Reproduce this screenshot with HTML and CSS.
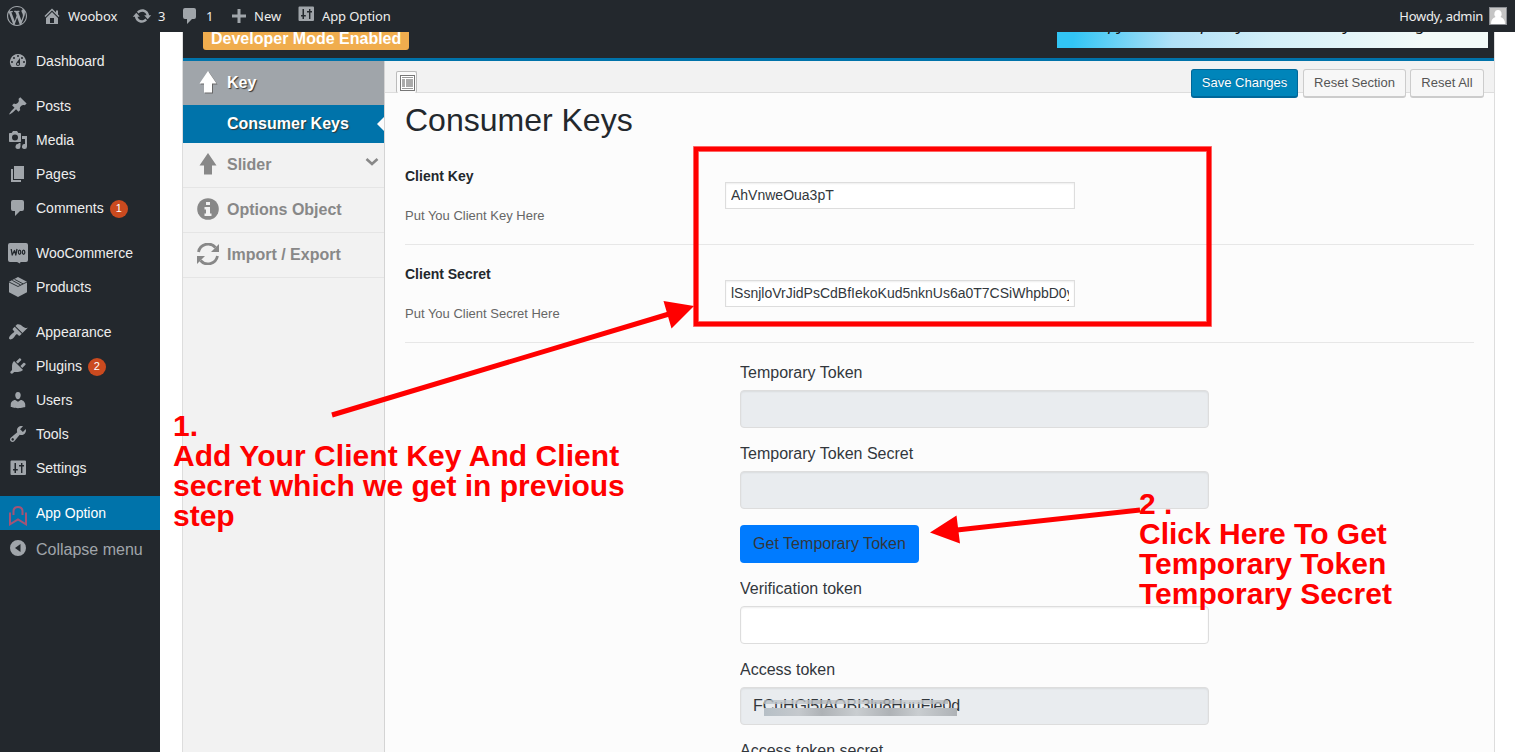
FILE: index.html
```
<!DOCTYPE html>
<html lang="en">
<head>
<meta charset="utf-8">
<title>App Option</title>
<link rel="stylesheet" href="styles.css">
</head>
<body>
<svg width="0" height="0" class="defs">
  <defs>
    <symbol id="settings" viewBox="0 0 20 20"><path fill-rule="evenodd" d="M3.500 2.500h13.500q1 0 1 1v12.500q0 1-1 1H3.500q-1 0-1-1V3.500q0-1 1-1zM6.500 5v6H5v1.500h1.500V15H8v-2.500h1.800V11H8V5zM13 5v2h-2v1.500h2V15h1.400V8.500H16V7h-1.600V5z"/></symbol>
    <symbol id="comment" viewBox="0 0 20 20"><path d="M5 2h9q2 0 2 2v7q0 2-2 2h-2l-5 5v-5H5q-2 0-2-2V4q0-2 2-2z"/></symbol>
    <symbol id="up" viewBox="0 0 22 22"><path d="M11 0l8.500 12.500H15V21.500H7v-9H2.500z"/></symbol>
  </defs>
</svg>
<header class="adminbar">
  <svg class="wp" viewBox="0 0 20 20"><path d="M20 10c0-5.510-4.490-10-10-10C4.480 0 0 4.490 0 10c0 5.520 4.480 10 10 10 5.510 0 10-4.480 10-10zM7.780 15.370L4.370 6.220c.55-.02 1.170-.08 1.170-.08.5-.06.44-1.130-.06-1.110 0 0-1.450.11-2.370.11-.18 0-.37 0-.58-.01C4.120 2.690 6.870 1.110 10 1.110c2.330 0 4.450.87 6.050 2.340-.68-.11-1.650.39-1.650 1.580 0 .74.45 1.360.9 2.100.35.610.55 1.360.55 2.460 0 1.490-1.400 5-1.400 5l-3.030-8.370c.54-.02.82-.17.82-.17.5-.05.44-1.250-.06-1.220 0 0-1.440.12-2.380.12-.87 0-2.330-.12-2.330-.12-.5-.03-.56 1.200-.06 1.220l.92.08 1.260 3.410zM17.410 10c.24-.64.74-1.870.43-4.250.7 1.290 1.050 2.710 1.050 4.250 0 3.290-1.730 6.240-4.400 7.780.97-2.590 1.940-5.200 2.920-7.780zM6.100 18.090C3.120 16.650 1.110 13.530 1.110 10c0-1.300.23-2.480.72-3.590C3.250 10.300 4.670 14.200 6.100 18.090zm4.030-6.630l2.580 6.980c-.86.29-1.760.45-2.710.45-.79 0-1.570-.11-2.290-.33.81-2.380 1.620-4.740 2.420-7.100z"/></svg>
  <svg class="home" viewBox="0 0 20 20"><path d="M16 8.500l1.530 1.530-1.060 1.060L10 4.600l-6.470 6.500-1.060-1.070L10 2.500l4 4v-2h2v4zm-6-2.460l6 5.990V18H4v-5.970zM12 17v-5H8v5h4z"/></svg>
  <span class="t-site">Woobox</span>
  <svg class="upd" viewBox="0 0 20 20"><path d="M10.200 3.280c3.530 0 6.430 2.610 6.920 6h2.080l-3.500 4-3.500-4h2.320c-.45-1.970-2.210-3.450-4.320-3.450-1.450 0-2.730.71-3.540 1.780L4.950 5.660C6.230 4.200 8.110 3.280 10.200 3.280zm-.4 13.440c-3.520 0-6.430-2.610-6.920-6H.8l3.500-4c1.170 1.330 2.330 2.670 3.500 4H5.480c.45 1.970 2.210 3.450 4.320 3.450 1.450 0 2.730-.71 3.540-1.780l1.710 1.950c-1.280 1.460-3.150 2.380-5.250 2.380z"/></svg>
  <span class="t-upd">3</span>
  <svg class="com"><use href="#comment"/></svg>
  <span class="t-com">1</span>
  <svg class="plus" viewBox="0 0 14 14"><path d="M5.500 0h3v5.500H14v3H8.500V14h-3V8.500H0v-3h5.500z"/></svg>
  <span class="t-new">New</span>
  <svg class="opt"><use href="#settings"/></svg>
  <span class="t-opt">App Option</span>
  <span class="howdy">Howdy, admin</span>
  <svg class="avatar" viewBox="0 0 18 18"><rect width="18" height="18" fill="#8c8f94"/><rect x="1" y="1" width="16" height="16" fill="#c5c5c5"/><path fill="#fff" d="M9 3a3.500 4 0 0 1 2.500 7c3 1 4.500 3 4.500 7H2c0-4 1.500-6 4.500-7A3.500 4 0 0 1 9 3z"/></svg>
</header>
<div class="shell">
  <nav class="menu">
    <a><svg viewBox="0 0 20 20"><path fill-rule="evenodd" d="M3.760 16h12.480A7.998 7.998 0 0 0 10 3a7.998 7.998 0 0 0-6.240 13zM10 4a1 1 0 1 1 0 2 1 1 0 0 1 0-2zM6 6a1 1 0 1 1 0 2 1 1 0 0 1 0-2zm8 0a1 1 0 1 1 0 2 1 1 0 0 1 0-2zm-5.370 5.550L12 7v6c0 1.100-.9 2-2 2s-2-.9-2-2c0-.57.24-1.080.63-1.450zM4 10a1 1 0 1 1 0 2 1 1 0 0 1 0-2zm12 0a1 1 0 1 1 0 2 1 1 0 0 1 0-2zm-5 3a1 1 0 1 0-2 0 1 1 0 0 0 2 0z"/></svg>Dashboard</a>
    <a class="gap"><svg viewBox="0 0 20 20"><path d="M10.440 3.020l1.820-1.820 6.360 6.350-1.830 1.820c-1.050-.68-2.480-.57-3.410.36l-.75.75c-.92.93-1.040 2.350-.35 3.410l-1.830 1.820-2.410-2.410-2.800 2.790c-.42.42-3.380 2.710-3.800 2.290s1.860-3.390 2.280-3.810l2.790-2.790L4.100 9.360l1.830-1.820c1.050.69 2.480.57 3.400-.36l.75-.75c.93-.92 1.050-2.350.36-3.410z"/></svg>Posts</a>
    <a><svg viewBox="0 0 20 20"><path fill-rule="evenodd" d="M13 11V4c0-.55-.45-1-1-1h-1.670L9 1H5L3.670 3H2c-.55 0-1 .45-1 1v7c0 .55.45 1 1 1h10c.55 0 1-.45 1-1zM7 4.500a3 3 0 1 1 0 6 3 3 0 0 1 0-6zM14 6h5v10.500a2.500 2.500 0 1 1-2-2.450V9h-3zm-3.500 8.050V13h2v3.500a2.500 2.500 0 1 1-2-2.450z"/></svg>Media</a>
    <a><svg viewBox="0 0 20 20"><path d="M6 15V2h10v13zm-1 1h8v2H3V5h2z"/></svg>Pages</a>
    <a><svg><use href="#comment"/></svg>Comments<b>1</b></a>
    <a class="gap"><svg class="woo" viewBox="0 0 20 20"><path d="M2 0h16q2 0 2 2v15q0 2-2 2h-5.500l-.5 1.500-3-1.500H2q-2 0-2-2V2q0-2 2-2z"/><path fill="none" stroke="#23282d" stroke-width="1.300" stroke-linejoin="round" d="M3.200 6l1 6L6.500 7.500l1.300 4.500L9 6"/><ellipse cx="11.600" cy="9.200" rx="1.200" ry="2.100" fill="none" stroke="#23282d" stroke-width="1.300"/><ellipse cx="15.600" cy="9.200" rx="1.200" ry="2.100" fill="none" stroke="#23282d" stroke-width="1.300"/></svg>WooCommerce</a>
    <a><svg viewBox="0 0 20 20"><path d="M10 0l9 4.700v10.600L10 20l-9-4.700V4.700z"/><path fill="none" stroke="#23282d" stroke-width=".9" d="M1 5l9 4.500L19 5M4.300 3.400l8.200 4.500M6.500 2.300l8.500 4.500"/></svg>Products</a>
    <a class="gap"><svg viewBox="0 0 20 20"><path d="M14.480 11.060L7.410 3.990l1.500-1.500c.5-.56 2.300-.47 3.510.32 1.210.8 1.430 1.280 2.910 2.100 1.180.64 2.450 1.260 4.450.85zm-.71.710L6.700 4.700 4.930 6.470c-.39.39-.39 1.020 0 1.410l1.060 1.060c.39.39.39 1.030 0 1.420-.6.6-1.430 1.110-2.210 1.690-.35.260-.7.530-1.010.84C1.430 14.230.400 16.080 1.400 17.070c.99 1 2.840-.03 4.180-1.360.31-.31.580-.66.850-1.020.57-.78 1.080-1.610 1.690-2.210.39-.39 1.020-.39 1.410 0l1.060 1.060c.39.39 1.020.39 1.410 0z"/></svg>Appearance</a>
    <a><svg viewBox="0 0 20 20"><path d="M13.110 4.360L9.870 7.600 8 5.730l3.240-3.240c.35-.34 1.050-.2 1.560.32.520.51.660 1.210.31 1.550zm-8 1.770l.91-1.120 9.010 9.010-1.190.84c-.71.710-2.630 1.160-3.820 1.160H6.140L4.900 17.260c-.59.590-1.540.590-2.120 0-.59-.58-.59-1.530 0-2.120l1.240-1.240v-3.880c0-1.130.4-3.190 1.090-3.890zm7.260 3.970l3.240-3.240c.34-.35 1.040-.21 1.550.31.520.51.660 1.210.31 1.550l-3.240 3.250z"/></svg>Plugins<b>2</b></a>
    <a><svg viewBox="0 0 20 20"><path d="M10 9.250c-2.270 0-2.730-3.440-2.730-3.440C7 4.020 7.820 2 9.970 2c2.160 0 2.980 2.020 2.710 3.810 0 0-.41 3.440-2.680 3.440zm0 2.570L12.720 10c2.390 0 4.520 2.330 4.520 4.530v2.490s-3.650 1.130-7.240 1.130c-3.650 0-7.240-1.130-7.240-1.130v-2.490c0-2.250 1.940-4.480 4.470-4.480z"/></svg>Users</a>
    <a><svg viewBox="0 0 20 20"><path fill-rule="evenodd" d="M16.680 9.770c-1.340 1.340-3.300 1.670-4.950.99l-5.410 6.520c-.99.990-2.590.990-3.580 0s-.99-2.590 0-3.570l6.520-5.420c-.68-1.650-.35-3.610.99-4.950 1.280-1.280 3.120-1.620 4.720-1.060l-2.890 2.890 2.820 2.820 2.860-2.870c.53 1.580.18 3.390-1.080 4.650zM3.810 16.210a1.250 1.250 0 0 0 1.770 0c.490-.490.490-1.290 0-1.770a1.250 1.250 0 0 0-1.770 1.770z"/></svg>Tools</a>
    <a><svg><use href="#settings"/></svg>Settings</a>
    <a class="gap current"><svg viewBox="0 0 20 20"><path d="M2 6.500v11.800l8-4.800 8 4.800V6.500M5.500 9V5.500q0-4.500 4.500-4.500t4.500 4.500V9" fill="none" stroke="#a35476" stroke-width="2"/></svg>App Option</a>
    <a class="collapse"><svg viewBox="0 0 20 20"><path fill-rule="evenodd" d="M10 2a8 8 0 1 1 0 16 8 8 0 0 1 0-16zm2.500 4L7 10l5.500 4z"/></svg>Collapse menu</a>
  </nav>
  <main class="panel">
    <div class="head"><span class="dev">Developer Mode Enabled</span><div class="ad"><i>copy</i><i>partly</i><i>way</i><i>design</i></div></div>
    <div class="cols">
      <aside class="side">
        <div class="sec active"><svg><use href="#up"/></svg>Key</div>
        <div class="sub">Consumer Keys</div>
        <div class="sec"><svg><use href="#up"/></svg>Slider<svg class="chev" viewBox="0 0 14 10"><path d="M1.500 2L7 7l5.500-5" fill="none" stroke="#888" stroke-width="2.600"/></svg></div>
        <div class="sec"><svg viewBox="0 0 22 22"><circle cx="11" cy="11" r="10.800"/><path fill="#f2f2f2" d="M9 4h4v3H9zM7.500 9H13v6.500h1.500V18h-7v-2.500H9v-4H7.500z"/></svg>Options Object</div>
        <div class="sec"><svg viewBox="0 0 22 22"><path d="M1.500 9A9.800 9.800 0 0 1 18.500 4.500M20.500 13A9.800 9.800 0 0 1 3.500 17.500" fill="none" stroke="#888" stroke-width="2.800"/><path d="M22 1v8h-8zM0 21v-8h8z"/></svg>Import / Export</div>
      </aside>
      <section class="content">
        <div class="bar"><span class="expand"><svg viewBox="0 0 15 16"><rect x=".5" y=".5" width="14" height="15" fill="#fff" stroke="#777"/><path stroke="#999" d="M2 2.500h11M2 13.500h11"/><path fill="#aaa" d="M2 4h3v8H2zM6 4h7v8H6z"/></svg></span>
          <div class="buttons"><span class="btn primary">Save Changes</span><span class="btn">Reset Section</span><span class="btn last">Reset All</span></div></div>
        <h2>Consumer Keys</h2>
        <div class="row"><div class="lab"><strong>Client Key</strong><small>Put You Client Key Here</small></div><div class="inp"><span>AhVnweOua3pT</span></div></div>
        <div class="row"><div class="lab"><strong>Client Secret</strong><small>Put You Client Secret Here</small></div><div class="inp"><span>lSsnjloVrJidPsCdBfIekoKud5nknUs6a0T7CSiWhpbD0y</span></div></div>
        <div class="form">
          <label>Temporary Token</label><div class="ctl ro"></div>
          <label>Temporary Token Secret</label><div class="ctl ro"></div>
          <div class="get">Get Temporary Token</div>
          <label>Verification token</label><div class="ctl"></div>
          <label>Access token</label><div class="ctl ro"><span class="tok">FCuHGl5IAQBI3lu8HuuFle0d</span><span class="smear s1"></span><span class="smear s2"></span></div>
          <label>Access token secret</label>
        </div>
      </section>
    </div>
  </main>
</div>
<svg class="marks" viewBox="0 0 1515 752">
  <rect x="696" y="149" width="513" height="175" fill="none" stroke="#f00" stroke-opacity=".5" stroke-width="6"/>
  <rect x="696" y="149" width="513" height="175" fill="none" stroke="#f00" stroke-width="4.400"/>
  <path d="M332 415L669 314M1140 510L957 530" stroke="#f00" stroke-width="5"/>
  <path fill="#f00" d="M694 306l-30.500-5 8 27.500zM930 532.500l26.500-17 3.500 28z"/>
</svg>
<div class="note n1">1.<br><span>Add Your Client Key And Client</span><br>secret which we get in previous<br>step</div>
<div class="note n2">2 .<br>Click Here To Get<br>Temporary Token<br>Temporary Secret</div>
</body>
</html>
```
FILE: styles.css
```
* { box-sizing: border-box; }
body { margin: 0; width: 1515px; height: 752px; overflow: hidden; position: relative; background: #fff; font: 14px "Liberation Sans", Arial, sans-serif; color: #23282d; }
.defs { position: absolute; }
svg { fill: #a0a5aa; flex: none; display: block; }
.adminbar { height: 32px; background: #23282d; display: flex; align-items: center; color: #eee; font: 13px "Noto Sans", "Open Sans", sans-serif; padding: 0 8px 0 7px; white-space: nowrap; }
.wp { width: 20px; height: 20px; }
.home { width: 20px; height: 20px; margin-left: 15px; }
.t-site { margin-left: 6px; width: 65px; letter-spacing: -.15px; }
.upd { width: 20px; height: 20px; margin-left: -1px; }
.t-upd { margin-left: 6px; width: 22px; }
.com { width: 20px; height: 20px; }
.t-com { margin-left: 6px; width: 26px; }
.plus { width: 14px; height: 14px; }
.t-new { margin-left: 8px; width: 42px; }
.opt { width: 20px; height: 20px; margin-top: -4px; }
.t-opt { margin-left: 6px; letter-spacing: -.1px; }
.howdy { margin-left: auto; letter-spacing: -.3px; }
.avatar { width: 18px; height: 18px; margin-left: 6px; }
.shell { display: flex; height: 720px; }
.menu { width: 160px; background: #23282d; padding-top: 12px; }
.menu a { height: 34px; display: flex; align-items: center; padding-left: 8px; color: #eee; }
.menu svg { width: 20px; height: 20px; margin-right: 8px; }
.menu .gap { margin-top: 11px; }
.menu b { width: 18px; height: 18px; border-radius: 9px; background: #ca4a1f; color: #fff; font: 11px/17px "Liberation Sans", sans-serif; text-align: center; margin-left: 6px; margin-top: 1px; }
.menu .current { background: #0073aa; color: #fff; }
.menu .current svg { margin-top: 5px; }
.menu .collapse { color: #a0a5aa; font-size: 16px; margin-top: 3px; }
.menu .collapse svg { margin-top: -5px; }
.menu .woo { overflow: visible; }
.panel { margin-left: 22px; width: 1313px; border: solid #ddd; border-width: 0 1px; }
.head { height: 29px; background: #23282d; border-bottom: 3px solid #0073aa; display: flex; justify-content: space-between; align-items: flex-start; padding: 0 6px 0 20px; overflow: hidden; }
.dev { height: 18px; width: 206px; background: #f0ad4e; border-radius: 0 0 3px 3px; color: #fff; font-weight: bold; font-size: 16px; line-height: 13px; padding-left: 8px; }
.ad { width: 431px; height: 16px; overflow: hidden; display: grid; grid-template-columns: 110px 121px 64px 1fr; padding-left: 34px; background: linear-gradient(100deg, #32c5f4 4%, #b0e0f7 27%, #d3eff8 50%, #f3faf8 85%); }
.ad i { margin-top: -18px; font: italic 17px/20px "Noto Sans", sans-serif; color: #111; white-space: nowrap; }
.cols { display: flex; height: 691px; }
.side { width: 202px; background: #f2f2f2; border-right: 1px solid #d4d4d4; font-weight: bold; font-size: 16px; color: #888; }
.sec { height: 45px; display: flex; align-items: center; border-bottom: 1px solid #e5e5e5; padding-left: 14px; padding-bottom: 1px; }
.sec svg { fill: #888; width: 22px; height: 22px; margin: -2px 8px 0 0; }
.sec .chev { width: 14px; height: 10px; margin: -5px 5px 0 auto; }
.sec.active { height: 44px; background: #a0a5aa; color: #fff; border: 0; text-shadow: 1px 1px 1px #333; }
.sec.active svg { fill: #fff; filter: drop-shadow(1px 1px 0 #666); }
.sub { height: 38px; line-height: 36px; background: #0073aa; color: #fff; padding: 0 0 1px 44px; text-shadow: 1px 1px 1px #333; display: flex; justify-content: space-between; align-items: center; }
.sub::after { content: ""; border: 7px solid transparent; border-left: 0; border-right-color: #fcfcfc; }
.content { flex: 1; background: #fcfcfc; }
.bar { height: 32px; background: #f2f2f2; border-bottom: 1px solid #ddd; display: flex; justify-content: space-between; padding: 8px 10px 0 11px; }
.expand { width: 21px; height: 22px; margin-top: 2px; padding: 3px 2px; border: 1px solid #bbb; border-bottom: 0; border-radius: 2px; background: #fafafa; }
.expand svg { width: 15px; height: 16px; margin-left: 1px; }
.buttons { display: flex; }
.btn { height: 29px; width: 103px; text-align: center; font-size: 13px; line-height: 26px; color: #555; background: #f7f7f7; border: 1px solid #ccc; border-bottom-width: 2px; border-radius: 3px; white-space: nowrap; }
.primary { width: 107px; background: #0085ba; color: #fff; border-color: #006799; margin-right: 5px; text-shadow: 0 -1px 1px #006799; }
.last { width: 74px; margin-left: 4px; }
h2 { margin: 6px 0 0 20px; font-size: 32px; font-weight: 400; line-height: 42px; }
.row { height: 98px; margin: 0 20px; border-bottom: 1px solid #e7e7e7; display: flex; }
h2 + .row { height: 104px; padding-top: 6px; }
.lab { width: 320px; padding-top: 20px; display: flex; flex-direction: column; }
.lab strong { font-size: 14px; line-height: 18px; }
.lab small { font-size: 13px; line-height: 18px; color: #666; margin-top: 22px; }
.inp { width: 350px; height: 27px; margin-top: 35px; border: 1px solid #ddd; box-shadow: inset 0 1px 2px rgba(0,0,0,.07); background: #fff; font-size: 14px; line-height: 25px; color: #32373c; padding: 0 5px; }
.inp span { display: block; overflow: hidden; white-space: nowrap; }
.form { margin-left: 355px; width: 469px; padding-top: 18px; height: 409px; overflow: hidden; font-size: 16px; color: #32373c; }
.form label { display: block; height: 24px; line-height: 24px; margin-bottom: 5px; }
.ctl { position: relative; height: 38px; border: 1px solid #ddd; border-radius: 4px; background: #fff; margin-bottom: 14px; padding-left: 12px; line-height: 36px; box-shadow: inset 0 1px 2px rgba(0,0,0,.07); }
.ro { background: #e9ecef; }
.tok { letter-spacing: -.08px; }
.get { width: 179px; height: 38px; margin: 16px 0 14px; border-radius: 4px; background: #007bff; line-height: 37px; padding-left: 13px; letter-spacing: .03px; }
.smear { position: absolute; height: 8px; background: linear-gradient(90deg, #b6bfc6, #c5c9cd 18%, #aeb2b6 30%, #c9cdd0 48%, #aeb2b6 65%, #c9cdd0 80%, #aeb2b6); }
.s1 { left: 23px; top: 12px; width: 184px; height: 4px; opacity: .8; }
.s2 { left: 23px; top: 20px; width: 193px; }
.marks { position: absolute; left: 0; top: 0; width: 1515px; height: 752px; }
.note { position: absolute; color: #f00; font-weight: bold; font-size: 30px; line-height: 30px; white-space: nowrap; }
.note span { letter-spacing: .06px; }
.n1 { left: 173px; top: 411px; }
.n2 { left: 1139px; top: 489px; }
```
